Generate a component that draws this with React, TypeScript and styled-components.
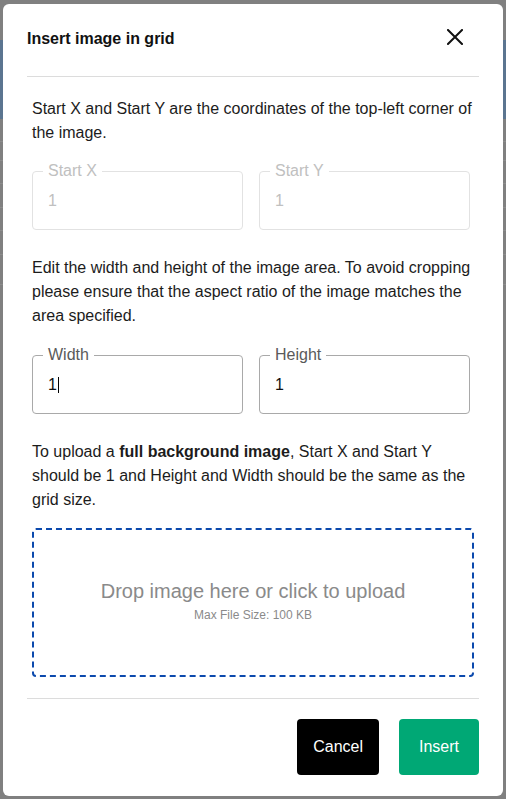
import React from "react";
import styled, { createGlobalStyle } from "styled-components";

const GlobalStyle = createGlobalStyle`
  html, body { margin: 0; padding: 0; }
  body {
    font-family: "Liberation Sans", Arial, Helvetica, sans-serif;
    background: #808080;
  }
  * { box-sizing: border-box; }
`;

const Screen = styled.div`
  position: relative;
  width: 506px;
  height: 799px;
  overflow: hidden;
  background: #808080;
`;

/* dimmed page that sits under the modal overlay */
const BgPage = styled.div`
  position: absolute;
  inset: 0;
  display: flex;
  flex-direction: column;
`;

const BgBand = styled.div`
  margin-top: 40px;
  height: 79px;
  background: #5b7590;
`;

const BgRow = styled.div<{ $h: number }>`
  height: ${(p) => p.$h}px;
  border-bottom: 1px solid #8c8c8c;
`;

const Overlay = styled.div`
  position: absolute;
  inset: 0;
  padding: 4px 3px 3px;
`;

const Dialog = styled.div`
  width: 500px;
  height: 792px;
  background: #ffffff;
  border-radius: 6px;
  display: flex;
  flex-direction: column;
`;

const Header = styled.div`
  margin: 0 24px;
  padding: 24px 0 26px;
  border-bottom: 1px solid #dcdcdc;
  display: flex;
  align-items: center;
  justify-content: space-between;
`;

const Title = styled.h2`
  margin: 0;
  font-size: 16px;
  line-height: 22px;
  font-weight: 700;
  color: #111;
`;

const CloseButton = styled.button`
  width: 32px;
  height: 22px;
  margin: -4px 8px 0 0;
  padding: 0;
  border: 0;
  background: transparent;
  display: flex;
  align-items: center;
  justify-content: center;
  cursor: pointer;
`;

const Body = styled.div`
  padding: 20px 29px 0;
  display: flex;
  flex-direction: column;
`;

const Paragraph = styled.p<{ $mt?: number }>`
  margin: ${(p) => p.$mt ?? 0}px 0 0;
  font-size: 16px;
  line-height: 24px;
  color: #1c1c1c;
  strong { font-weight: 700; }
`;

const FieldRow = styled.div<{ $mt: number }>`
  margin-top: ${(p) => p.$mt}px;
  width: 438px;
  display: grid;
  grid-template-columns: 1fr 1fr;
  gap: 16px;
`;

const Fieldset = styled.fieldset<{ $disabled?: boolean }>`
  margin: 0;
  padding: 0 0 6px;
  min-width: 0;
  border: 1px solid ${(p) => (p.$disabled ? "#e2e2e2" : "#a9a9a9")};
  border-radius: 4px;
`;

const Legend = styled.legend<{ $disabled?: boolean }>`
  margin-left: 10px;
  padding: 0 5px;
  font-size: 16px;
  line-height: 16px;
  color: ${(p) => (p.$disabled ? "#c0c0c0" : "#5a5a5a")};
`;

const Value = styled.div<{ $disabled?: boolean }>`
  height: 44px;
  padding: 0 15px;
  display: flex;
  align-items: center;
  font-size: 16px;
  color: ${(p) => (p.$disabled ? "#c0c0c0" : "#111")};
`;

const Caret = styled.span`
  display: inline-block;
  width: 1px;
  height: 16px;
  margin-left: 1px;
  background: #000;
`;

const Dropzone = styled.div`
  margin-top: 16px;
  width: 442px;
  height: 149px;
  border: 2px dashed #0b49ad;
  border-radius: 4px;
  display: flex;
  flex-direction: column;
  align-items: center;
  padding-top: 49px;
  cursor: pointer;
`;

const DropTitle = styled.div`
  font-size: 20px;
  line-height: 24px;
  color: #8a8a8a;
`;

const DropHint = styled.div`
  margin-top: 5px;
  font-size: 12px;
  line-height: 14px;
  color: #8a8a8a;
`;

const Footer = styled.div`
  margin: 21px 24px 0;
  padding: 20px 0;
  border-top: 1px solid #dcdcdc;
  display: flex;
  justify-content: flex-end;
  gap: 20px;
`;

const Button = styled.button<{ $variant: "dark" | "green" }>`
  height: 56px;
  min-width: 80px;
  padding: 0 16px;
  border: 0;
  border-radius: 4px;
  font-family: inherit;
  font-size: 16px;
  color: #fff;
  background: ${(p) => (p.$variant === "dark" ? "#000" : "#00a875")};
  cursor: pointer;
`;

type FieldProps = { label: string; value: string; disabled?: boolean; focused?: boolean };

const Field = ({ label, value, disabled, focused }: FieldProps) => (
  <Fieldset $disabled={disabled}>
    <Legend $disabled={disabled}>{label}</Legend>
    <Value $disabled={disabled}>
      {value}
      {focused && <Caret />}
    </Value>
  </Fieldset>
);

const bgRowHeights = [23, 19, 23, 24, 23, 24, 30];

export default function App() {
  return (
    <>
      <GlobalStyle />
      <Screen>
        <BgPage>
          <BgBand />
          {bgRowHeights.map((h, i) => (
            <BgRow key={i} $h={h} />
          ))}
        </BgPage>
        <Overlay>
          <Dialog role="dialog" aria-label="Insert image in grid">
            <Header>
              <Title>Insert image in grid</Title>
              <CloseButton aria-label="Close">
                <svg width="16" height="16" viewBox="0 0 16 16">
                  <path d="M1 1 L15 15 M15 1 L1 15" stroke="#111" strokeWidth="2" strokeLinecap="square" />
                </svg>
              </CloseButton>
            </Header>
            <Body>
              <Paragraph>
                Start X and Start Y are the coordinates of the top-left corner of the image.
              </Paragraph>
              <FieldRow $mt={18}>
                <Field label="Start X" value="1" disabled />
                <Field label="Start Y" value="1" disabled />
              </FieldRow>
              <Paragraph $mt={26}>
                Edit the width and height of the image area. To avoid cropping please ensure that
                the aspect ratio of the image matches the area specified.
              </Paragraph>
              <FieldRow $mt={19}>
                <Field label="Width" value="1" focused />
                <Field label="Height" value="1" />
              </FieldRow>
              <Paragraph $mt={26}>
                To upload a <strong>full background image</strong>, Start X and Start Y should be 1
                and Height and Width should be the same as the grid size.
              </Paragraph>
              <Dropzone>
                <DropTitle>Drop image here or click to upload</DropTitle>
                <DropHint>Max File Size: 100 KB</DropHint>
              </Dropzone>
            </Body>
            <Footer>
              <Button $variant="dark">Cancel</Button>
              <Button $variant="green">Insert</Button>
            </Footer>
          </Dialog>
        </Overlay>
      </Screen>
    </>
  );
}
